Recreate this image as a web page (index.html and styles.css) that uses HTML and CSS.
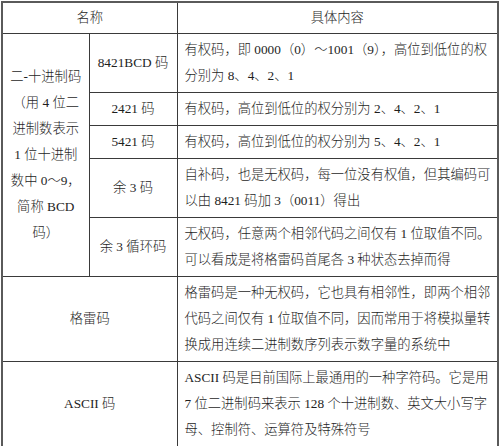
FILE: index.html
```html
<!DOCTYPE html>
<html lang="zh-CN">
<head>
<meta charset="utf-8">
<title>编码表</title>
<link rel="stylesheet" href="styles.css">
</head>
<body>
<table class="codes">
  <colgroup>
    <col class="c1">
    <col class="c2">
    <col class="c3">
  </colgroup>
  <thead>
    <tr>
      <th colspan="2">名称</th>
      <th>具体内容</th>
    </tr>
  </thead>
  <tbody>
    <tr>
      <td rowspan="5" class="group">二-十进制码<br>（用 4 位二<br>进制数表示<br>1 位十进制<br>数中 0～9，<br>简称 BCD<br>码）</td>
      <td class="name">8421BCD 码</td>
      <td class="desc">有权码，即 0000（0）～1001（9），高位到低位的权<br>分别为 8、4、2、1</td>
    </tr>
    <tr>
      <td class="name">2421 码</td>
      <td class="desc">有权码，高位到低位的权分别为 2、4、2、1</td>
    </tr>
    <tr>
      <td class="name">5421 码</td>
      <td class="desc">有权码，高位到低位的权分别为 5、4、2、1</td>
    </tr>
    <tr>
      <td class="name">余 3 码</td>
      <td class="desc">自补码，也是无权码，每一位没有权值，但其编码可<br>以由 8421 码加 3（0011）得出</td>
    </tr>
    <tr>
      <td class="name">余 3 循环码</td>
      <td class="desc">无权码，任意两个相邻代码之间仅有 1 位取值不同。<br>可以看成是将格雷码首尾各 3 种状态去掉而得</td>
    </tr>
    <tr>
      <td colspan="2" class="name">格雷码</td>
      <td class="desc">格雷码是一种无权码，它也具有相邻性，即两个相邻<br>代码之间仅有 1 位取值不同，因而常用于将模拟量转<br>换成用连续二进制数序列表示数字量的系统中</td>
    </tr>
    <tr>
      <td colspan="2" class="name tall">ASCII 码</td>
      <td class="desc tall">ASCII 码是目前国际上最通用的一种字符码。它是用<br>7 位二进制码来表示 128 个十进制数、英文大小写字<br>母、控制符、运算符及特殊符号</td>
    </tr>
  </tbody>
</table>
</body>
</html>
```
FILE: styles.css
```css
html, body {
  margin: 0;
  padding: 0;
  background: #ffffff;
}

body {
  padding: 1px 0 0 1px;
  font-family: "Liberation Serif", "Noto Sans CJK SC", serif;
  font-size: 13.3px;
  font-weight: 300;
  color: #1e1e1e;
}

.codes {
  border-collapse: collapse;
  table-layout: fixed;
  width: 496px;
  border: 2px solid #5a5a5a;
}

.c1 { width: 87px; }
.c2 { width: 88px; }
.c3 { width: 321px; }

.codes th,
.codes td {
  border: 1px solid #3a3a3a;
  line-height: 26px;
  padding: 3px 0;
  vertical-align: middle;
  font-weight: 300;
  white-space: nowrap;
}

.codes th {
  text-align: center;
  padding: 2px 0;
}

.group,
.name {
  text-align: center;
}

.desc {
  text-align: left;
  padding-left: 7px !important;
}

.codes td.tall {
  padding-bottom: 4px;
}
```
